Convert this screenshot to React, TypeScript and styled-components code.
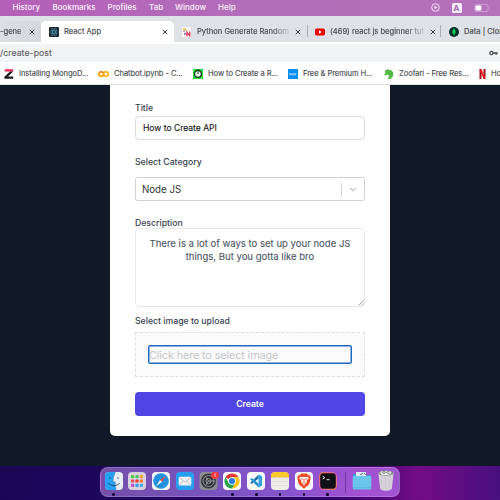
import React from "react";
import styled, { createGlobalStyle } from "styled-components";

const GlobalStyle = createGlobalStyle`
  * { box-sizing: border-box; }
  body { margin: 0; font-family: Inter, "Liberation Sans", sans-serif; }
  svg { display: block; flex: none; }
  button, input, textarea { font-family: inherit; }
`;

const Desktop = styled.div`
  width: 500px;
  height: 500px;
  overflow: hidden;
  display: grid;
  grid-template-rows: 16px 26px 20px 22px 382px 34px;
  background: #111827;
`;

const MenuBar = styled.header`
  display: flex;
  align-items: center;
  background: linear-gradient(90deg, #b45fb8, #b26eb9 50%, #b472b9);
  color: #fbeffb;
  padding-bottom: 2px;
`;

const MenuItem = styled.span<{ $w: number }>`
  flex: none;
  width: ${(p) => p.$w}px;
  font-size: 8px;
  line-height: 14px;
  font-weight: 500;
  white-space: nowrap;
`;

const StatusIcons = styled.div`
  display: flex;
  align-items: center;
  gap: 12px;
  margin-left: auto;
  padding: 1px 9.5px 0 0;
`;

const InputSource = styled.span`
  width: 10px;
  height: 10px;
  border-radius: 1.5px;
  background: #f8edf8;
  color: #97599d;
  font-size: 8px;
  line-height: 10px;
  font-weight: 600;
  text-align: center;
`;

const TabStrip = styled.nav`
  display: flex;
  padding-top: 5px;
  background: #dee1e6;
  overflow: hidden;
`;

const Tab = styled.div<{ $w: number; $active?: boolean; $hover?: boolean; $pad?: number; $end?: number }>`
  flex: none;
  width: ${(p) => p.$w}px;
  height: 21px;
  display: flex;
  align-items: center;
  padding: 0 ${(p) => p.$end ?? 5}px 0 ${(p) => p.$pad ?? 8}px;
  border-radius: 5px 5px 0 0;
  background: ${(p) => (p.$active ? "#fff" : p.$hover ? "linear-gradient(90deg, #dcdfe4, #d3d6db)" : "transparent")};
  color: #45494d;
`;

const TabTitle = styled.span<{ $fade?: boolean; $gap?: number }>`
  flex: 1;
  min-width: 0;
  margin-left: ${(p) => p.$gap ?? 5}px;
  margin-right: 5px;
  overflow: hidden;
  white-space: nowrap;
  font-size: 7.6px;
  line-height: 12px;
  -webkit-text-stroke: 0.15px currentColor;
  mask-image: ${(p) => (p.$fade ? "linear-gradient(90deg, #000 80%, rgba(0, 0, 0, 0.15))" : "none")};
`;

const TabDivider = styled.span`
  flex: none;
  width: 1px;
  height: 12px;
  margin-top: 4px;
  background: #a9adb2;
`;

const AddressRow = styled.div`
  background: #fff;
  padding-top: 2px;
`;

const AddressField = styled.div`
  height: 18px;
  display: flex;
  align-items: center;
  justify-content: space-between;
  padding-right: 2px;
  background: #f1f3f4;
  color: #5f6368;
  font-size: 8.6px;
  line-height: 16px;
  letter-spacing: 0.12px;
  -webkit-text-stroke: 0.15px currentColor;
`;

const Bookmarks = styled.nav`
  display: flex;
  align-items: center;
  background: #fff;
  overflow: hidden;
  padding: 1px 0 0 4px;
`;

const Bookmark = styled.span<{ $w: number }>`
  flex: none;
  width: ${(p) => p.$w}px;
  display: flex;
  align-items: center;
  gap: 5px;
`;

const BookmarkLabel = styled.span`
  font-size: 7.6px;
  line-height: 12px;
  color: #45494d;
  letter-spacing: -0.08px;
  white-space: nowrap;
  -webkit-text-stroke: 0.1px currentColor;
`;

const Page = styled.main`
  background: #111827;
  border-top: 1px solid #e0e0e2;
`;

const Card = styled.form`
  width: 280px;
  height: 351px;
  margin: 0 auto;
  padding: 16px 25px 0;
  background: #fff;
  border-radius: 0 0 5px 5px;
`;

const Label = styled.label<{ $h: number }>`
  display: block;
  height: ${(p) => p.$h}px;
  font-size: 8.7px;
  line-height: 15px;
  font-weight: 500;
  color: #374151;
`;

const TitleInput = styled.input`
  display: block;
  width: 230px;
  height: 24px;
  padding: 0 7px;
  margin-bottom: 15px;
  border: 1px solid #d9dbdf;
  border-radius: 4px;
  outline: none;
  background: #fff;
  color: #111;
  font-size: 8.6px;
  letter-spacing: -0.03px;
  -webkit-text-stroke: 0.1px #111;
`;

const Select = styled.div`
  width: 230px;
  height: 24px;
  margin-bottom: 15px;
  display: flex;
  align-items: center;
  padding-left: 6px;
  border: 1px solid #d2d2d2;
  border-radius: 2.5px;
  font-size: 9.7px;
  color: #333;
`;

const SelectValue = styled.span`
  flex: 1;
`;

const SelectArrow = styled.span`
  width: 23px;
  height: 13px;
  display: grid;
  place-items: center;
  border-left: 1px solid #d2d2d2;
`;

const DescriptionField = styled.div`
  position: relative;
  width: 230px;
  margin-bottom: 7px;
`;

const Description = styled.textarea`
  display: block;
  width: 100%;
  height: 79px;
  padding: 9px 12px;
  border: 1px solid #e7e9ec;
  border-radius: 4px;
  outline: none;
  resize: none;
  overflow: hidden;
  text-align: center;
  font-size: 9.55px;
  line-height: 12.5px;
  color: #4b5563;
  -webkit-text-stroke: 0.1px currentColor;
`;

const ResizeGrip = styled.svg`
  position: absolute;
  right: 1px;
  bottom: 1px;
`;

const DropZone = styled.div`
  width: 230px;
  height: 45px;
  padding: 12px 12px;
  margin-bottom: 15px;
  border: 1px dashed #dedede;
  background: #fafafa;
`;

const DropPrompt = styled.div`
  width: 204px;
  height: 19px;
  border: 1px solid #2168c5;
  box-shadow: inset 0 0 0 0.5px #2168c5;
  border-radius: 2px;
  font-size: 10.8px;
  line-height: 19px;
  letter-spacing: -0.1px;
  color: #c5c7cb;
  white-space: nowrap;
`;

const CreateButton = styled.button`
  display: block;
  width: 230px;
  height: 24px;
  padding: 0;
  border: 0;
  border-radius: 4px;
  background: #4f46e5;
  color: #fff;
  font-size: 8.6px;
  font-weight: 600;
`;

const Wallpaper = styled.footer`
  display: flex;
  justify-content: center;
  align-items: flex-start;
  padding-top: 1px;
  background: linear-gradient(90deg, #190755 0%, #22075f 30%, #2b0767 65%, #730b86 84%, #47107c 100%);
`;

const Dock = styled.div`
  width: 300px;
  height: 30px;
  display: flex;
  align-items: flex-start;
  padding: 4px 0 0 3.5px;
  gap: 5.8px;
  border-radius: 8px;
  border: 1px solid rgba(255, 255, 255, 0.18);
  background: linear-gradient(90deg, #7450a9, #7753bd 35%, #8a55d0 65%, #a451d1 88%, #9f55cf);
`;

const DockItem = styled.div`
  flex: none;
  width: 18px;
  display: flex;
  flex-direction: column;
  align-items: center;
  gap: 3px;
`;

const RunningDot = styled.span`
  width: 2.6px;
  height: 2.6px;
  border-radius: 50%;
  background: #150a35;
`;

const DockDivider = styled.span`
  flex: none;
  width: 1px;
  height: 21px;
  margin: 0 1.6px 0 2.6px;
  background: #6d3b9e;
`;

const Close = () => (
  <svg width="6" height="6" viewBox="0 0 6 6">
    <path d="M.8.8 5.2 5.2M5.2.8.8 5.2" stroke="#36393d" strokeWidth="1" />
  </svg>
);

const ReactMark = () => (
  <svg width="10" height="10" viewBox="0 0 10 10" fill="none" stroke="#4795ab" strokeWidth=".6">
    <rect width="10" height="10" rx="1" fill="#20242b" stroke="none" />
    <ellipse cx="5" cy="5" rx="4.1" ry="1.6" />
    <ellipse cx="5" cy="5" rx="4.1" ry="1.6" transform="rotate(60 5 5)" />
    <ellipse cx="5" cy="5" rx="4.1" ry="1.6" transform="rotate(120 5 5)" />
    <circle cx="5" cy="5" r=".5" />
  </svg>
);

const PythonSite = () => (
  <svg width="9" height="10" viewBox="0 0 9 10" fill="none">
    <rect width="9" height="10" fill="#fff8f8" />
    <path d="M.8 1l3 2.4M.8 3.6l3.2-2.4M4 2.6l1.5 1.6" stroke="#e9b431" strokeWidth="1" />
    <path d="M1.5 5 3 3.4M2.8 8.2V5.8L4.8 8" stroke="#7f5cae" strokeWidth="1" />
    <path d="M5 9.2V5.2l2.8 3.6V4.6" stroke="#e22c4a" strokeWidth="1.2" />
  </svg>
);

const YouTube = () => (
  <svg width="10" height="8" viewBox="0 0 10 8">
    <rect y=".4" width="10" height="7.2" rx="1.8" fill="#f40000" />
    <path d="m4 2.3 2.8 1.7L4 5.7Z" fill="#fff" />
  </svg>
);

const Leaf = () => (
  <svg width="10" height="10" viewBox="0 0 10 10">
    <circle cx="5" cy="5" r="5" fill="#042c2b" />
    <path d="M5 1.2c2.5 2.5 2.2 5.2 0 6.8-2.2-1.6-2.5-4.3 0-6.8Z" fill="#00c85b" />
    <path d="M5 4v4.8" stroke="#058347" strokeWidth=".5" />
  </svg>
);

const KeyIcon = () => (
  <svg width="9" height="6" viewBox="0 0 9 6" fill="none" stroke="#45494d">
    <circle cx="2.4" cy="3" r="1.6" strokeWidth="1.2" />
    <path d="M4 3h4.7M7.2 3v1.8" strokeWidth="1.4" />
  </svg>
);

const PlayStatus = () => (
  <svg width="9" height="9" viewBox="0 0 9 9">
    <circle cx="4.5" cy="4.5" r="3.8" fill="none" stroke="#fbeffb" strokeWidth=".9" />
    <path d="m3.5 2.8 2.8 1.7-2.8 1.7Z" fill="#fbeffb" />
  </svg>
);

const Battery = () => (
  <svg width="17" height="8" viewBox="0 0 17 8">
    <rect x=".5" y=".5" width="13.5" height="7" rx="2" fill="none" stroke="#d3a6d7" strokeWidth=".8" />
    <rect x="1.5" y="1.5" width="5.8" height="5" rx="1" fill="#fff" />
    <path d="M15.2 2.8q1.2 1.2 0 2.4" fill="#d3a6d7" />
  </svg>
);

const ZMark = () => (
  <svg width="10" height="10" viewBox="0 0 10 10">
    <path d="M.8.2h8.4v2.4H.8Z" fill="#f0315d" />
    <path d="M6 2.6h3.2L4 7.5h5.2v2.3H.4V7.7Z" fill="#1f1b20" />
  </svg>
);

const Colab = () => (
  <svg width="11" height="8" viewBox="0 0 11 8" fill="none" strokeWidth="1.5">
    <circle cx="3.2" cy="4" r="2.3" stroke="#e8710a" />
    <circle cx="7.9" cy="4" r="2.3" stroke="#f9ab00" />
    <path d="M4.9 5.6A2.3 2.3 0 0 1 1.6 2.4" stroke="#f9ab00" />
  </svg>
);

const GreenClock = () => (
  <svg width="10" height="10" viewBox="0 0 10 10">
    <rect width="10" height="10" fill="#27df43" />
    <circle cx="5" cy="5" r="3.4" fill="#e9f8e9" stroke="#13361a" strokeWidth="1.2" />
    <path d="M5 2.8V5M3.4 1h3.2" stroke="#13361a" strokeWidth="1" />
  </svg>
);

const BlueSite = () => (
  <svg width="10" height="10" viewBox="0 0 10 10">
    <rect width="10" height="10" fill="#098ff4" />
    <path d="M1.2 4.7h1.9m.4 0h2m.4 0h2.6M1.2 5.7H8" stroke="#b7ddfb" strokeWidth=".8" />
  </svg>
);

const Zoofari = () => (
  <svg width="10" height="10" viewBox="0 0 10 10">
    <path d="M.6 1.6 2.6 1 3.4 0l1.4.7c3.2 0 5 2.6 4.4 5.6-.3 1.9-1.5 3.2-3.2 3.6H3.6l1.6-2.6-1.4-1.7L1.4 6.4.3 5.4l1.1-1.8Z" fill="#55b848" />
  </svg>
);

const RedN = () => (
  <svg width="7" height="10" viewBox="0 0 7 10">
    <path d="M.5 0h2v10h-2ZM4.5 0h2v10h-2Z" fill="#a80b13" />
    <path d="M.5 0h2l4 10h-2Z" fill="#ed1823" />
  </svg>
);

const Finder = () => (
  <svg width="18" height="18" viewBox="0 0 18 18">
    <rect width="18" height="18" rx="4" fill="#e6edf5" />
    <path d="M4 0h6.4Q8 4.5 8 9.8h2.2Q10 14 11.2 18H4a4 4 0 0 1-4-4V4a4 4 0 0 1 4-4Z" fill="#27a1f3" />
    <path d="M10.4.3Q8 4.5 8 9.8h2.2Q10 14 11.2 17.8" fill="none" stroke="#3d6c93" strokeWidth=".4" />
    <path d="M5 5.2v1.7M13 5.2v1.7M3.3 11.4q5.7 4.7 11.4 0" fill="none" stroke="#193854" strokeWidth=".8" />
  </svg>
);

const padColors = ["#59c94d", "#4dc768", "#f5a623", "#f45151", "#ee4036", "#f17a25", "#b657d3", "#2e9df3", "#42a9f5"];
const Launchpad = () => (
  <svg width="18" height="18" viewBox="0 0 18 18">
    <rect width="18" height="18" rx="4" fill="#d9d1e2" />
    {padColors.map((c, i) => (
      <rect key={i} x={3 + (i % 3) * 4.4} y={3 + Math.floor(i / 3) * 4.4} width="3.2" height="3.2" rx=".8" fill={c} />
    ))}
  </svg>
);

const Safari = () => (
  <svg width="18" height="18" viewBox="0 0 18 18">
    <rect width="18" height="18" rx="4" fill="#f2f4f7" />
    <circle cx="9" cy="9" r="7.8" fill="#238fdf" />
    <circle cx="9" cy="9" r="6.9" fill="none" stroke="#62b1ea" strokeWidth=".7" strokeDasharray=".4 1" />
    <path d="M14 3.8 8 8l2 2Z" fill="#ed5048" />
    <path d="m4 14.2 4-6.2 2 2Z" fill="#edf2f5" />
  </svg>
);

const Mail = () => (
  <svg width="18" height="18" viewBox="0 0 18 18">
    <rect width="18" height="18" rx="4" fill="#269ff0" />
    <rect x="2.7" y="4.8" width="12.6" height="8.8" rx="1" fill="#f0f3f6" />
    <path d="m3 5.2 6 5 6-5M3 13.3l4.4-4.4m7.6 4.4-4.4-4.4" fill="none" stroke="#a4aab1" strokeWidth=".7" />
  </svg>
);

const Settings = () => (
  <svg width="21" height="18" viewBox="0 0 21 18">
    <rect x="1.5" width="18" height="18" rx="4" fill="#8d8d94" />
    <circle cx="10.5" cy="9" r="7.3" fill="#303136" stroke="#4b4c50" strokeDasharray=".7 .5" />
    <circle cx="10.5" cy="9" r="5.5" fill="none" stroke="#9c9da0" strokeWidth=".9" />
    <circle cx="10.5" cy="9" r="2.5" fill="none" stroke="#96979b" strokeWidth=".9" />
    <path d="M10.5 9h6M10.5 9 7.3 4.2M10.5 9l-3.2 4.8" stroke="#9c9da0" />
    <circle cx="17" cy="3.2" r="3.8" fill="#fb3c40" />
    <path d="m16.2 2.2 1-.7v3.6" stroke="#ffd9dc" strokeWidth=".7" fill="none" />
  </svg>
);

const Chrome = () => (
  <svg width="18" height="18" viewBox="0 0 18 18">
    <rect width="18" height="18" rx="4" fill="#fafafa" />
    <path d="M9 9 2.5 5.2A7.5 7.5 0 0 1 15.5 5.2H9Z" fill="#e63b32" />
    <path d="M9 9V5.2h6.5A7.5 7.5 0 0 1 9 16.5l3.2-5.6Z" fill="#fbc116" />
    <path d="M9 9l3.2 2L9 16.5A7.5 7.5 0 0 1 2.5 5.2L5.8 11Z" fill="#28a04b" />
    <circle cx="9" cy="9" r="3.8" fill="#fff" />
    <circle cx="9" cy="9" r="3" fill="#287ce2" />
  </svg>
);

const VSCode = () => (
  <svg width="18" height="18" viewBox="0 0 18 18">
    <rect width="18" height="18" rx="4" fill="#fafafa" />
    <path d="M11.6 2.6v3.8L4.6 12l-1.4-1.2Z" fill="#2574ae" />
    <path d="M3.2 7.2 4.6 6l7 5.6v3.8Z" fill="#268fd1" />
    <path d="M11.6 2.6 15 4.2v9.6l-3.4 1.6Z" fill="#31a2e4" />
  </svg>
);

const Notes = () => (
  <svg width="18" height="18" viewBox="0 0 18 18">
    <rect width="18" height="18" rx="4" fill="#eeede7" />
    <path d="M0 5.2V4a4 4 0 0 1 4-4h10a4 4 0 0 1 4 4v1.2Z" fill="#f9c82c" />
    <path d="M0 5.7h18" stroke="#bb9a56" strokeWidth=".5" strokeDasharray=".6 .5" />
    <path d="M1.5 9.5h15m-15 4h15" stroke="#d7d6d1" strokeWidth=".5" />
  </svg>
);

const Brave = () => (
  <svg width="18" height="18" viewBox="0 0 18 18">
    <rect width="18" height="18" rx="4" fill="#fafafa" />
    <path d="m6 1.6 6 0 1.5 1.6 1.2 0 .9 2.2-1.2 6.7L9 16.7l-5.4-4.6-1.2-6.7.9-2.2 1.2 0Z" fill="#f14a27" />
    <path d="m5 4.8 2.4.4L9 4.7l1.6.5L13 4.8l.7 1.5-2.3 2.8.4 1.7-2 1.1L9 14.3l-.8-2.4-2-1.1.4-1.7-2.3-2.8Z" fill="#fff" />
    <path d="m5.8 6.8 2.5.5M12.2 6.8l-2.5.5M9 7v3m-1.5.4L9 11.2l1.5-.8" stroke="#f14a27" strokeWidth=".8" fill="none" />
  </svg>
);

const Terminal = () => (
  <svg width="18" height="18" viewBox="0 0 18 18">
    <defs>
      <linearGradient id="termEdge" x2="1" y2="1">
        <stop stopColor="#ed774f" />
        <stop offset=".5" stopColor="#df5fb0" />
        <stop offset="1" stopColor="#ef835d" />
      </linearGradient>
    </defs>
    <rect x=".6" y=".6" width="16.8" height="16.8" rx="3.6" fill="#111115" stroke="url(#termEdge)" strokeWidth="1.2" />
    <path d="m3.7 4.3 2 1.4-2 1.3M7.5 7.7h3" fill="none" stroke="#fff" strokeWidth=".9" />
  </svg>
);

const Folder = () => (
  <svg width="20" height="18" viewBox="0 0 20 18">
    <path d="M1 2h6l1 1h11v5H1Z" fill="#3d9ccb" />
    <path d="M4 0h10v5H4Z" fill="#e4e8ef" />
    <path d="m8 3 3-2m1 0 2 2" stroke="#486a89" strokeWidth=".9" fill="none" />
    <rect x=".7" y="4" width="18.6" height="13.5" rx="1.2" fill="#6ac6ed" />
    <path d="M1 15.7h18" stroke="#4eafd7" strokeWidth=".6" />
  </svg>
);

const Trash = () => (
  <svg width="18" height="22" viewBox="0 0 18 22">
    <path d="M1.3 3h15.4l-2 16.2Q9 22.4 3.3 19.2Z" fill="#d6d2d9" />
    <ellipse cx="9" cy="3.2" rx="7.7" ry="2.6" fill="#8e9191" />
    <path d="m3 3 2-2 2 2 2-2.6L11 3l2-2 1.5 2-3 2H5Z" fill="#f1f1ef" />
    <path d="m4 6 1.6 12m3-11v12m5-13-1.6 12" stroke="#c5c1ca" strokeWidth=".5" fill="none" />
    <path d="m5 2 2 2 2-2 2 2 2-1" stroke="#505759" strokeWidth=".6" fill="none" />
  </svg>
);

const dockApps: { name: string; Icon: React.FC; running?: boolean }[] = [
  { name: "Finder", Icon: Finder, running: true },
  { name: "Launchpad", Icon: Launchpad },
  { name: "Safari", Icon: Safari },
  { name: "Mail", Icon: Mail },
  { name: "Settings", Icon: Settings },
  { name: "Chrome", Icon: Chrome, running: true },
  { name: "VSCode", Icon: VSCode, running: true },
  { name: "Notes", Icon: Notes, running: true },
  { name: "Brave", Icon: Brave, running: true },
  { name: "Terminal", Icon: Terminal, running: true },
];

const TrashSlot = styled(DockItem)`
  margin-top: -2px;
`;

export default function App() {
  return (
    <Desktop>
      <GlobalStyle />
      <MenuBar>
        <MenuItem $w={12.5} />
        <MenuItem $w={40}>History</MenuItem>
        <MenuItem $w={55}>Bookmarks</MenuItem>
        <MenuItem $w={41.5}>Profiles</MenuItem>
        <MenuItem $w={26}>Tab</MenuItem>
        <MenuItem $w={43}>Window</MenuItem>
        <MenuItem $w={30}>Help</MenuItem>
        <StatusIcons>
          <PlayStatus />
          <InputSource>A</InputSource>
          <Battery />
        </StatusIcons>
      </MenuBar>
      <TabStrip>
        <Tab $w={41} $pad={0} $end={6} $hover>
          <TabTitle $gap={0} $fade>-gene</TabTitle>
          <Close />
        </Tab>
        <Tab $w={133} $active $end={6}>
          <ReactMark />
          <TabTitle>React App</TabTitle>
          <Close />
        </Tab>
        <Tab $w={133} $end={6}>
          <PythonSite />
          <TabTitle $fade $gap={6}>Python Generate Random</TabTitle>
          <Close />
        </Tab>
        <TabDivider />
        <Tab $w={132} $pad={7} $end={4}>
          <YouTube />
          <TabTitle $fade>(469) react js beginner tut</TabTitle>
          <Close />
        </Tab>
        <TabDivider />
        <Tab $w={80} $pad={8} $end={0}>
          <Leaf />
          <TabTitle>Data | Clou</TabTitle>
        </Tab>
      </TabStrip>
      <AddressRow>
        <AddressField>
          <span>/create-post</span>
          <KeyIcon />
        </AddressField>
      </AddressRow>
      <Bookmarks>
        <Bookmark $w={94}><ZMark /><BookmarkLabel>Installing MongoD...</BookmarkLabel></Bookmark>
        <Bookmark $w={95}><Colab /><BookmarkLabel>Chatbot.ipynb - C...</BookmarkLabel></Bookmark>
        <Bookmark $w={95}><GreenClock /><BookmarkLabel>How to Create a R...</BookmarkLabel></Bookmark>
        <Bookmark $w={96}><BlueSite /><BookmarkLabel>Free &amp; Premium H...</BookmarkLabel></Bookmark>
        <Bookmark $w={95}><Zoofari /><BookmarkLabel>Zoofari - Free Res...</BookmarkLabel></Bookmark>
        <Bookmark $w={30}><RedN /><BookmarkLabel>Ho</BookmarkLabel></Bookmark>
      </Bookmarks>
      <Page>
        <Card>
          <Label $h={15}>Title</Label>
          <TitleInput defaultValue="How to Create API" />
          <Label $h={22}>Select Category</Label>
          <Select>
            <SelectValue>Node JS</SelectValue>
            <SelectArrow>
              <svg width="8" height="5" viewBox="0 0 8 5">
                <path d="m1 1 3 2.8L7 1" fill="none" stroke="#c7c7c7" strokeWidth="1.2" />
              </svg>
            </SelectArrow>
          </Select>
          <Label $h={12}>Description</Label>
          <DescriptionField>
            <Description defaultValue={"There is a lot of ways to set up your node JS things, But you gotta like bro"} />
            <ResizeGrip width="6" height="6" viewBox="0 0 6 6">
              <path d="M.5 5.5l5-5M3.2 5.5l2.3-2.3" stroke="#8d8d8d" strokeWidth=".8" />
            </ResizeGrip>
          </DescriptionField>
          <Label $h={18}>Select image to upload</Label>
          <DropZone>
            <DropPrompt>Click here to select image</DropPrompt>
          </DropZone>
          <CreateButton type="button">Create</CreateButton>
        </Card>
      </Page>
      <Wallpaper>
        <Dock>
          {dockApps.map(({ name, Icon, running }) => (
            <DockItem key={name}>
              <Icon />
              {running && <RunningDot />}
            </DockItem>
          ))}
          <DockDivider />
          <DockItem><Folder /></DockItem>
          <TrashSlot><Trash /></TrashSlot>
        </Dock>
      </Wallpaper>
    </Desktop>
  );
}
